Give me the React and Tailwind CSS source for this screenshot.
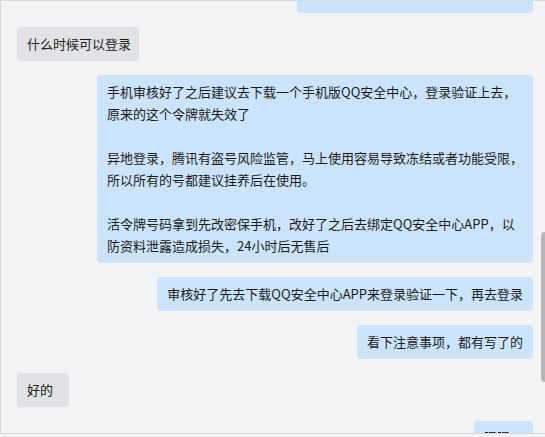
export default function App() {
  const font = { fontFamily: '"Noto Sans CJK SC", "Noto Sans", sans-serif' };
  const right = "self-end rounded bg-[#cce4fb] px-2.5 py-1.5 text-[13px] leading-[22px] text-[#1b1b1b] whitespace-pre";
  const left = "self-start rounded bg-[#e1e2e5] px-2.5 py-1.5 text-[13px] leading-[22px] text-[#1b1b1b] whitespace-pre";
  return (
    <div className="relative w-[545px] h-[437px] overflow-hidden bg-[#f3f3f5]" style={font}>
      <div className="h-[434px] overflow-hidden border-y border-l border-[#d9d9dc] bg-[#f2f3f5] pl-4 pr-3 flex flex-col gap-3.5">
        <div className={right + " mt-[-25px] pb-[9px] w-[236px]"}>注意看下 24 小时后 再去 登录使用</div>
        <div className={left + " text-[12.5px] pr-2"}>什么时候可以登录</div>
        <div className={right}>
          {"手机审核好了之后建议去下载一个手机版QQ安全中心，登录验证上去，\n原来的这个令牌就失效了\n\n异地登录，腾讯有盗号风险监管，马上使用容易导致冻结或者功能受限，\n所以所有的号都建议挂养后在使用。\n\n活令牌号码拿到先改密保手机，改好了之后去绑定QQ安全中心APP，以\n防资料泄露造成损失，24小时后无售后"}
        </div>
        <div className={right}>审核好了先去下载QQ安全中心APP来登录验证一下，再去登录</div>
        <div className={right}>看下注意事项，都有写了的</div>
        <div className={left + " w-[52px]"}>好的</div>
        <div className={right + " pt-[5px]"}>嗯嗯。</div>
      </div>
      <div className="absolute right-0 top-[232px] h-[150px] w-[4px] rounded-l-sm bg-[#b5b5b8]" />
    </div>
  );
}
